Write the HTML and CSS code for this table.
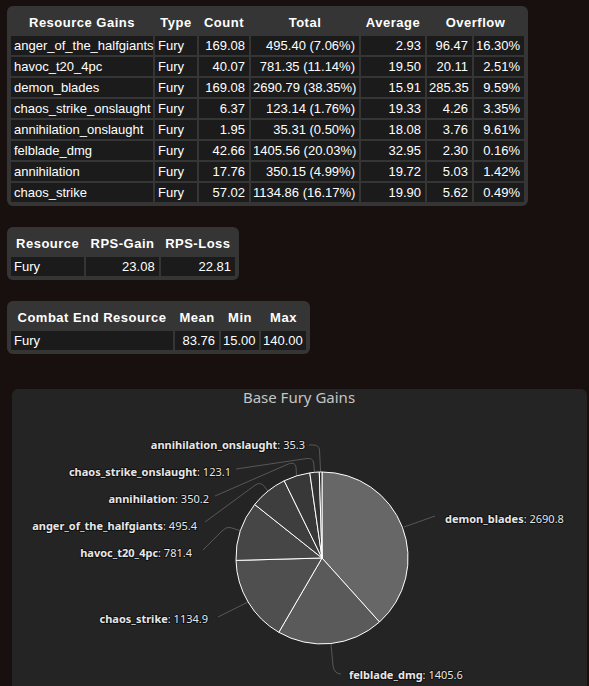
FILE: index.html
```html
<!DOCTYPE html>
<html>
<head>
<meta charset="utf-8">
<link rel="stylesheet" href="styles.css">
</head>
<body>
<div class="page">
  <table class="box t-gains">
    <colgroup><col class="g1"><col class="g2"><col class="g3"><col class="g4"><col class="g5"><col class="g6"><col class="g7"></colgroup>
    <thead>
      <tr><th>Resource Gains</th><th>Type</th><th>Count</th><th>Total</th><th>Average</th><th colspan="2">Overflow</th></tr>
    </thead>
    <tbody>
      <tr><td class="l">anger_of_the_halfgiants</td><td class="l">Fury</td><td>169.08</td><td>495.40 (7.06%)</td><td>2.93</td><td>96.47</td><td>16.30%</td></tr>
      <tr><td class="l">havoc_t20_4pc</td><td class="l">Fury</td><td>40.07</td><td>781.35 (11.14%)</td><td>19.50</td><td>20.11</td><td>2.51%</td></tr>
      <tr><td class="l">demon_blades</td><td class="l">Fury</td><td>169.08</td><td>2690.79 (38.35%)</td><td>15.91</td><td>285.35</td><td>9.59%</td></tr>
      <tr><td class="l">chaos_strike_onslaught</td><td class="l">Fury</td><td>6.37</td><td>123.14 (1.76%)</td><td>19.33</td><td>4.26</td><td>3.35%</td></tr>
      <tr><td class="l">annihilation_onslaught</td><td class="l">Fury</td><td>1.95</td><td>35.31 (0.50%)</td><td>18.08</td><td>3.76</td><td>9.61%</td></tr>
      <tr><td class="l">felblade_dmg</td><td class="l">Fury</td><td>42.66</td><td>1405.56 (20.03%)</td><td>32.95</td><td>2.30</td><td>0.16%</td></tr>
      <tr><td class="l">annihilation</td><td class="l">Fury</td><td>17.76</td><td>350.15 (4.99%)</td><td>19.72</td><td>5.03</td><td>1.42%</td></tr>
      <tr><td class="l">chaos_strike</td><td class="l">Fury</td><td>57.02</td><td>1134.86 (16.17%)</td><td>19.90</td><td>5.62</td><td>0.49%</td></tr>
    </tbody>
  </table>

  <table class="box t-rps">
    <colgroup><col class="r1"><col class="r2"><col class="r3"></colgroup>
    <thead><tr><th>Resource</th><th>RPS-Gain</th><th>RPS-Loss</th></tr></thead>
    <tbody><tr><td class="l">Fury</td><td>23.08</td><td>22.81</td></tr></tbody>
  </table>

  <table class="box t-end">
    <colgroup><col class="e1"><col class="e2"><col class="e3"><col class="e4"></colgroup>
    <thead><tr><th>Combat End Resource</th><th>Mean</th><th>Min</th><th>Max</th></tr></thead>
    <tbody><tr><td class="l">Fury</td><td>83.76</td><td>15.00</td><td>140.00</td></tr></tbody>
  </table>

  <div class="chart">
    <div class="chart-title">Base Fury Gains</div>
    <svg class="pie" width="575" height="300" viewBox="12 403 575 300" xmlns="http://www.w3.org/2000/svg">
      <g class="conn">
        <path d="M404 525 L435 514"/>
        <path d="M331 642 L333 664 Q334.5 672 341 672"/>
        <path d="M248 600 L218 615"/>
        <path d="M240 528.5 L230 525.5 Q226 524.5 222 529 L203 548"/>
        <path d="M268 489 L264 484 Q261 480 256 482.5 L205 520"/>
        <path d="M296.5 474 L296 465 Q295 460 289.5 461.5 L215 494"/>
        <path d="M314.5 470 L313.5 460 Q312.5 456 307 456.5 L236 467"/>
        <path d="M320.6 470 L319.5 448 Q319 443 313 443 L309 443"/>
      </g>
      <g class="slices">
        <path fill="#676767" d="M322 556 L322 470 A86 86 0 0 1 379.5 620 Z"/>
        <path fill="#5a5a5a" d="M322 556 L379.5 620 A86 86 0 0 1 278.8 630.3 Z"/>
        <path fill="#4f4f4f" d="M322 556 L278.8 630.3 A86 86 0 0 1 236 558.4 Z"/>
        <path fill="#464646" d="M322 556 L236 558.4 A86 86 0 0 1 254.7 502.5 Z"/>
        <path fill="#3e3e3e" d="M322 556 L254.7 502.5 A86 86 0 0 1 284.2 478.8 Z"/>
        <path fill="#383838" d="M322 556 L284.2 478.8 A86 86 0 0 1 309.8 470.9 Z"/>
        <path fill="#333333" d="M322 556 L309.8 470.9 A86 86 0 0 1 319.3 470 Z"/>
        <path fill="#2f2f2f" d="M322 556 L319.3 470 A86 86 0 0 1 322 470 Z"/>
      </g>
      <g class="labels">
        <text x="305" y="447" text-anchor="end"><tspan class="n">annihilation_onslaught</tspan>: 35.3</text>
        <text x="231" y="474" text-anchor="end"><tspan class="n">chaos_strike_onslaught</tspan>: 123.1</text>
        <text x="209" y="501" text-anchor="end"><tspan class="n">annihilation</tspan>: 350.2</text>
        <text x="197" y="528" text-anchor="end"><tspan class="n">anger_of_the_halfgiants</tspan>: 495.4</text>
        <text x="192" y="555" text-anchor="end"><tspan class="n">havoc_t20_4pc</tspan>: 781.4</text>
        <text x="208" y="621" text-anchor="end"><tspan class="n">chaos_strike</tspan>: 1134.9</text>
        <text x="445" y="521"><tspan class="n">demon_blades</tspan>: 2690.8</text>
        <text x="349" y="677"><tspan class="n">felblade_dmg</tspan>: 1405.6</text>
      </g>
    </svg>
  </div>
</div>
</body>
</html>
```

FILE: styles.css
```css
html, body {
  margin: 0;
  padding: 0;
  overflow: hidden;
  background: #17100e;
}

body {
  font-family: "Liberation Sans", Arial, sans-serif;
  font-size: 13px;
  color: #ffffff;
}

.page {
  display: flex;
  flex-direction: column;
  align-items: flex-start;
  gap: 21px;
  padding: 6px 0 0 7px;
}

.box {
  background: #353535;
  border-collapse: separate;
  border-spacing: 2px;
  padding: 0 2px 2px 2px;
  border-radius: 6px;
  table-layout: fixed;
}

.box th {
  font-weight: bold;
  text-align: center;
  line-height: 16px;
  letter-spacing: 0.5px;
  padding: 7px 0 3px 0;
  white-space: nowrap;
}

.box td {
  background: #1b1b1b;
  line-height: 15px;
  padding: 2px 4px 2px 2px;
  text-align: right;
  white-space: nowrap;
}

.box td.l {
  text-align: left;
  padding-left: 3px;
}

.t-gains { width: 520px; }
.g1 { width: 142px; }
.g2 { width: 42px; }
.g3 { width: 50px; }
.g4 { width: 108px; }
.g5 { width: 64px; }
.g6 { width: 45px; }
.g7 { width: 50px; }

.t-rps { width: 232px; }
.r1 { width: 73px; }
.r2 { width: 72px; }
.r3 { width: 74px; }

.t-end { width: 302px; }
.e1 { width: 162px; }
.e2 { width: 44px; }
.e3 { width: 38px; }
.e4 { width: 45px; }

.chart {
  margin: 14px 0 0 5px;
  width: 575px;
  height: 316px;
  background: #242424;
  border-radius: 6px;
}

.chart-title {
  font-family: "Noto Sans", sans-serif;
  font-size: 15px;
  line-height: 16px;
  height: 16px;
  text-align: center;
  color: #c4c4c4;
  padding-right: 0;
  margin-left: -1px;
}

.pie {
  display: block;
}

.conn path {
  fill: none;
  stroke: #575757;
  stroke-width: 1;
}

.slices path {
  stroke: #ffffff;
  stroke-width: 1;
  stroke-linejoin: round;
}

.labels text {
  font-family: "Noto Sans", sans-serif;
  font-size: 11px;
  fill: #e6e6e6;
  stroke: #111111;
  stroke-width: 2px;
  stroke-linejoin: round;
  paint-order: stroke;
}

.labels .n {
  font-weight: bold;
}
```
